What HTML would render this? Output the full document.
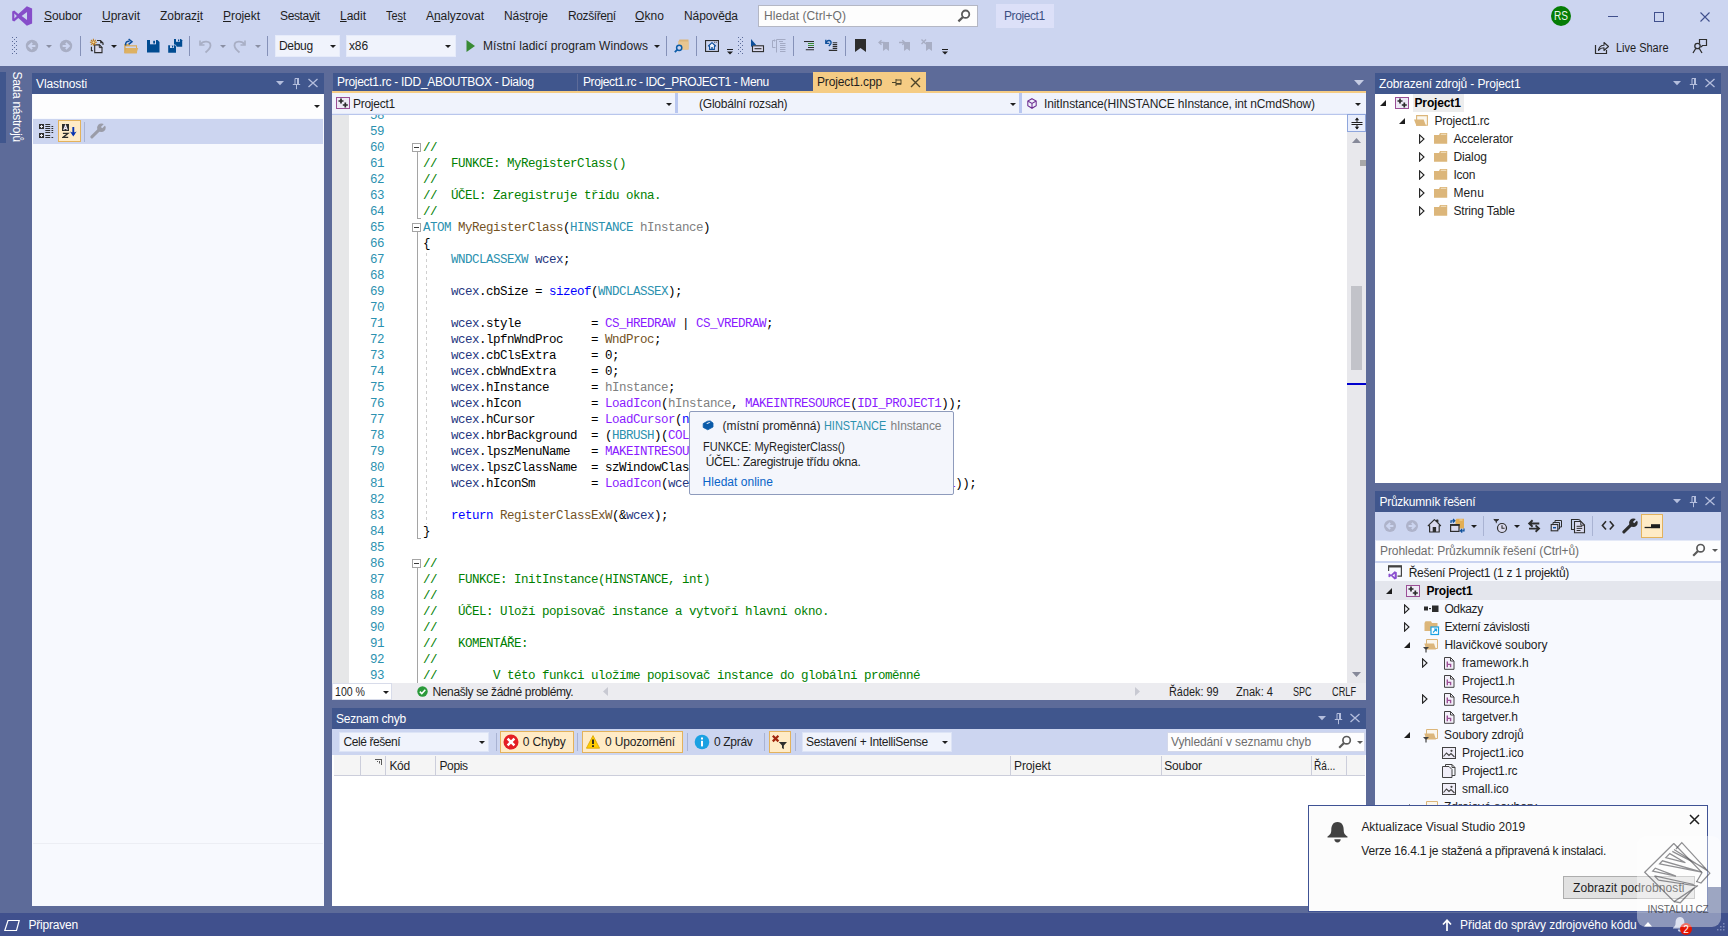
<!DOCTYPE html>
<html><head><meta charset="utf-8"><title>Project1 - Microsoft Visual Studio</title>
<style>
html,body{margin:0;padding:0;overflow:hidden;}
body{width:1728px;height:936px;overflow:hidden;position:relative;background:#5D6B99;font-family:"Liberation Sans",sans-serif;font-size:12px;}
div,svg,.t{position:absolute;}
.t{white-space:pre;}
u{text-decoration:underline;text-underline-offset:1px;}
.ln{left:17px;width:35px;text-align:right;font:12.5px/16px "Liberation Mono",monospace;letter-spacing:-0.501px;color:#2B91AF;height:16px;white-space:pre;}
.cl{left:91px;font:12.5px/16px "Liberation Mono",monospace;letter-spacing:-0.501px;color:#000;height:16px;white-space:pre;}
.cl span{position:static;}
</style></head>
<body>
<div style="left:0px;top:0px;width:1728px;height:66px;background:#CCD5F0;"></div>
<svg style="left:12px;top:6px;" width="20.5" height="20" viewBox="0 0 21 21" preserveAspectRatio="none"><path d="M15.2 0.3 L20.6 2.6 V18.4 L15.2 20.7 L6.5 12.6 L2.3 16.3 L0.2 15.2 V5.8 L2.3 4.7 L6.5 8.4 Z M15.4 6.2 L9.9 10.5 L15.4 14.8 Z M2.4 8 V13 L5 10.5 Z" fill="#864DC9" fill-rule="evenodd"/></svg>
<span id="t1" class="t" style="left:44px;top:8px;font-size:12px;line-height:16px;color:#1E1E1E;letter-spacing:-0.131px;"><u>S</u>oubor</span>
<span id="t2" class="t" style="left:102px;top:8px;font-size:12px;line-height:16px;color:#1E1E1E;letter-spacing:-0.002px;"><u>U</u>pravit</span>
<span id="t3" class="t" style="left:160px;top:8px;font-size:12px;line-height:16px;color:#1E1E1E;letter-spacing:-0.050px;">Zobraz<u>i</u>t</span>
<span id="t4" class="t" style="left:223px;top:8px;font-size:12px;line-height:16px;color:#1E1E1E;letter-spacing:-0.055px;"><u>P</u>rojekt</span>
<span id="t5" class="t" style="left:280px;top:8px;font-size:12px;line-height:16px;color:#1E1E1E;letter-spacing:-0.358px;">Sesta<u>v</u>it</span>
<span id="t6" class="t" style="left:340px;top:8px;font-size:12px;line-height:16px;color:#1E1E1E;letter-spacing:-0.010px;"><u>L</u>adit</span>
<span id="t7" class="t" style="left:386px;top:8px;font-size:12px;line-height:16px;color:#1E1E1E;transform-origin:0 0;transform:scaleX(0.9078);">Te<u>s</u>t</span>
<span id="t8" class="t" style="left:426px;top:8px;font-size:12px;line-height:16px;color:#1E1E1E;letter-spacing:-0.077px;">A<u>n</u>alyzovat</span>
<span id="t9" class="t" style="left:504px;top:8px;font-size:12px;line-height:16px;color:#1E1E1E;letter-spacing:-0.094px;">Nás<u>t</u>roje</span>
<span id="t10" class="t" style="left:568px;top:8px;font-size:12px;line-height:16px;color:#1E1E1E;letter-spacing:-0.397px;">Rozšíře<u>n</u>í</span>
<span id="t11" class="t" style="left:635px;top:8px;font-size:12px;line-height:16px;color:#1E1E1E;letter-spacing:0.085px;"><u>O</u>kno</span>
<span id="t12" class="t" style="left:684px;top:8px;font-size:12px;line-height:16px;color:#1E1E1E;letter-spacing:-0.100px;">Nápově<u>d</u>a</span>
<div style="left:758px;top:5px;width:220px;height:22px;background:#FDFDFD;border:1px solid #B4B7C4;box-sizing:border-box;"></div>
<span id="t13" class="t" style="left:764px;top:8px;font-size:12px;line-height:16px;color:#6E6E6E;letter-spacing:0.067px;">Hledat (Ctrl+Q)</span>
<svg style="left:957px;top:9px;" width="14" height="14" viewBox="0 0 14 14" preserveAspectRatio="none"><circle cx="8.6" cy="5.2" r="3.7" fill="none" stroke="#5A5A5A" stroke-width="1.8"/><path d="M6 8L1.4 12.4" stroke="#5A5A5A" stroke-width="2.3"/></svg>
<div style="left:996px;top:4px;width:58px;height:24px;background:#DCE0F8;"></div>
<span id="t14" class="t" style="left:1004px;top:8px;font-size:12px;line-height:16px;color:#3B4F81;letter-spacing:-0.404px;">Project1</span>
<div style="left:1551px;top:6px;width:20px;height:20px;background:#057D05;border-radius:10px;"></div>
<span id="t15" class="t" style="left:1554px;top:8px;font-size:12px;line-height:16px;color:#EAF5EA;transform-origin:0 0;transform:scaleX(0.8397);">RS</span>
<svg style="left:1600px;top:8px;" width="120" height="18" viewBox="0 0 120 18" preserveAspectRatio="none"><path d="M8 8.5H18" stroke="#40508D" stroke-width="1"/><rect x="54.5" y="4.5" width="9" height="9" fill="none" stroke="#40508D" stroke-width="1"/><path d="M100.5 4.5 L109.5 13.5 M109.5 4.5 L100.5 13.5" stroke="#40508D" stroke-width="1.1"/></svg>
<svg style="left:12px;top:37px;" width="6" height="18" viewBox="0 0 6 18" preserveAspectRatio="none"><rect x="0" y="0" width="1" height="1" fill="#5B6B99"/><rect x="4" y="0" width="1" height="1" fill="#5B6B99"/><rect x="2" y="2" width="1" height="1" fill="#5B6B99"/><rect x="2" y="2" width="1" height="1" fill="#5B6B99"/><rect x="0" y="4" width="1" height="1" fill="#5B6B99"/><rect x="4" y="4" width="1" height="1" fill="#5B6B99"/><rect x="2" y="6" width="1" height="1" fill="#5B6B99"/><rect x="2" y="6" width="1" height="1" fill="#5B6B99"/><rect x="0" y="8" width="1" height="1" fill="#5B6B99"/><rect x="4" y="8" width="1" height="1" fill="#5B6B99"/><rect x="2" y="10" width="1" height="1" fill="#5B6B99"/><rect x="2" y="10" width="1" height="1" fill="#5B6B99"/><rect x="0" y="12" width="1" height="1" fill="#5B6B99"/><rect x="4" y="12" width="1" height="1" fill="#5B6B99"/><rect x="2" y="14" width="1" height="1" fill="#5B6B99"/><rect x="2" y="14" width="1" height="1" fill="#5B6B99"/><rect x="0" y="16" width="1" height="1" fill="#5B6B99"/><rect x="4" y="16" width="1" height="1" fill="#5B6B99"/></svg>
<svg style="left:25px;top:39px;" width="14" height="14" viewBox="0 0 14 14" preserveAspectRatio="none"><g transform="translate(7 7) "><circle r="6.2" fill="#A8AEC4"/><path d="M3.4 0H-2.4M0.2 -3L-2.9 0L0.2 3" fill="none" stroke="#CCD5F0" stroke-width="1.9"/></g></svg>
<svg style="left:46px;top:45px;" width="6" height="3" viewBox="0 0 6 3" preserveAspectRatio="none"><path d="M0 0H6L3.0 3Z" fill="#8A8FA3"/></svg>
<svg style="left:59px;top:39px;" width="14" height="14" viewBox="0 0 14 14" preserveAspectRatio="none"><g transform="translate(7 7) scale(-1 1)"><circle r="6.2" fill="#A8AEC4"/><path d="M3.4 0H-2.4M0.2 -3L-2.9 0L0.2 3" fill="none" stroke="#CCD5F0" stroke-width="1.9"/></g></svg>
<div style="left:80px;top:36px;width:1px;height:20px;background:#8591B8;"></div>
<svg style="left:89px;top:38px;" width="16" height="16" viewBox="0 0 16 16" preserveAspectRatio="none"><path d="M8 2.5H11.5L14 5V7" fill="none" stroke="#2D2D2D" stroke-width="1.1"/><path d="M11.2 2.2L14.3 5.3H11.2Z" fill="#2D2D2D"/><path d="M5.7 6.9H10.5L13 9.4V14.6H5.7Z" fill="#DADAEE" stroke="#2D2D2D" stroke-width="1.1"/><path d="M10.3 6.6V9.6H13.3" fill="none" stroke="#2D2D2D" stroke-width="1"/><path d="M2.4 8.7V12.7H4" fill="none" stroke="#2D2D2D" stroke-width="1.1"/><g stroke="#C27D1A" stroke-width="1.05"><path d="M4.4 0.8V7.8M0.9 4.3H7.9M1.9 1.8L6.9 6.8M6.9 1.8L1.9 6.8"/></g><circle cx="4.4" cy="4.3" r="1.1" fill="#F2D9A8"/></svg>
<svg style="left:111px;top:45px;" width="6" height="3" viewBox="0 0 6 3" preserveAspectRatio="none"><path d="M0 0H6L3.0 3Z" fill="#1E1E1E"/></svg>
<svg style="left:123px;top:38px;" width="16" height="16" viewBox="0 0 16 16" preserveAspectRatio="none"><path d="M1.2 6H5.5L6.8 7.3H14V15.3H1.2Z" fill="#D9A956"/><path d="M2.6 8.4H13V10H2.6Z" fill="#CCD5F0"/><path d="M3.6 10H15.2L13.6 15.3H1.6Z" fill="#DDB163"/><path d="M2.6 7.5C2.2 4.3 4 2.9 6.5 3.2" fill="none" stroke="#0D4F9A" stroke-width="1.5"/><path d="M5.6 1L9 3.7L5.6 6.4" fill="none" stroke="#0D4F9A" stroke-width="1.5"/></svg>
<svg style="left:147px;top:40px;" width="13" height="13" viewBox="0 0 13 13" preserveAspectRatio="none"><path d="M0 0H10.5L12.5 2V12.5H0Z" fill="#004B91"/><rect x="3" y="0" width="6" height="4.3" fill="#CCD5F0"/><rect x="6.2" y="0.8" width="1.8" height="2.7" fill="#004B91"/></svg>
<svg style="left:167px;top:38px;" width="16" height="16" viewBox="0 0 16 16" preserveAspectRatio="none"><path d="M7 1H14L15.2 2.2V8.8H7Z" fill="#004B91"/><rect x="9" y="1" width="4" height="2.8" fill="#CCD5F0"/><rect x="11" y="1.5" width="1.2" height="1.8" fill="#004B91"/><path d="M0.6 6.6H8.2L9.6 8V15.2H0.6Z" fill="#CCD5F0"/><path d="M1.2 7.2H8L9 8.2V14.8H1.2Z" fill="#004B91"/><rect x="3" y="7.2" width="4" height="2.8" fill="#CCD5F0"/><rect x="5" y="7.7" width="1.2" height="1.8" fill="#004B91"/></svg>
<div style="left:189px;top:36px;width:1px;height:20px;background:#8591B8;"></div>
<svg style="left:199px;top:39px;" width="13" height="15" viewBox="0 0 13 15" preserveAspectRatio="none"><g transform=""><path d="M1 1.5V6H5.5" fill="none" stroke="#A8AEC4" stroke-width="1.6"/><path d="M1.5 5.5C4 1.5 11.5 1.5 11.5 6.5C11.5 9.5 9 11.5 6.5 13.5" fill="none" stroke="#A8AEC4" stroke-width="1.8"/></g></svg>
<svg style="left:220px;top:45px;" width="6" height="3" viewBox="0 0 6 3" preserveAspectRatio="none"><path d="M0 0H6L3.0 3Z" fill="#8A8FA3"/></svg>
<svg style="left:233px;top:39px;" width="13" height="15" viewBox="0 0 13 15" preserveAspectRatio="none"><g transform="translate(13 0) scale(-1 1)"><path d="M1 1.5V6H5.5" fill="none" stroke="#A8AEC4" stroke-width="1.6"/><path d="M1.5 5.5C4 1.5 11.5 1.5 11.5 6.5C11.5 9.5 9 11.5 6.5 13.5" fill="none" stroke="#A8AEC4" stroke-width="1.8"/></g></svg>
<svg style="left:255px;top:45px;" width="6" height="3" viewBox="0 0 6 3" preserveAspectRatio="none"><path d="M0 0H6L3.0 3Z" fill="#8A8FA3"/></svg>
<div style="left:267px;top:36px;width:1px;height:20px;background:#8591B8;"></div>
<div style="left:275px;top:35px;width:65px;height:22px;background:#F0F3FC;border:1px solid #E6EBFA;box-sizing:border-box;"></div>
<span id="t16" class="t" style="left:279px;top:38px;font-size:12px;line-height:16px;color:#1E1E1E;letter-spacing:-0.306px;">Debug</span>
<svg style="left:330px;top:45px;" width="6" height="3" viewBox="0 0 6 3" preserveAspectRatio="none"><path d="M0 0H6L3.0 3Z" fill="#1E1E1E"/></svg>
<div style="left:346px;top:35px;width:110px;height:22px;background:#F0F3FC;border:1px solid #E6EBFA;box-sizing:border-box;"></div>
<span id="t17" class="t" style="left:349px;top:38px;font-size:12px;line-height:16px;color:#1E1E1E;letter-spacing:-0.144px;">x86</span>
<svg style="left:445px;top:45px;" width="6" height="3" viewBox="0 0 6 3" preserveAspectRatio="none"><path d="M0 0H6L3.0 3Z" fill="#1E1E1E"/></svg>
<svg style="left:466px;top:40px;" width="10" height="12" viewBox="0 0 10 12" preserveAspectRatio="none"><path d="M0.5 0L9 6L0.5 12Z" fill="#388A34"/></svg>
<span id="t18" class="t" style="left:483px;top:38px;font-size:12px;line-height:16px;color:#1E1E1E;letter-spacing:0.033px;">Místní ladicí program Windows</span>
<svg style="left:654px;top:45px;" width="6" height="3" viewBox="0 0 6 3" preserveAspectRatio="none"><path d="M0 0H6L3.0 3Z" fill="#1E1E1E"/></svg>
<div style="left:666px;top:36px;width:1px;height:20px;background:#8591B8;"></div>
<svg style="left:674px;top:38px;" width="16" height="16" viewBox="0 0 16 16" preserveAspectRatio="none"><path d="M4.5 3.5L5.5 1.5H14.5V11.5H4.5Z" fill="#DCB67A"/><path d="M4.5 3.5H14.5V11.5H4.5Z" fill="#E8C691"/><circle cx="5.2" cy="9.8" r="2.6" fill="#CCD5F0" stroke="#0D5DA8" stroke-width="1.5"/><path d="M3.4 11.6L0.8 14.2" stroke="#0D5DA8" stroke-width="1.8"/></svg>
<div style="left:696px;top:36px;width:1px;height:20px;background:#8591B8;"></div>
<svg style="left:705px;top:40px;" width="14" height="12" viewBox="0 0 14 12" preserveAspectRatio="none"><rect x="0.55" y="0.55" width="12.9" height="10.9" fill="none" stroke="#2D2D2D" stroke-width="1.1"/><path d="M7 2.6L3.4 6H4.6V9.4H9.4V6H10.6Z" fill="#F2F5FC" stroke="#0D4F9A" stroke-width="1.1" stroke-linejoin="round"/><rect x="6.3" y="7" width="1.4" height="2.4" fill="#0D4F9A"/><rect x="9.2" y="1.8" width="0.9" height="0.9" fill="#2D2D2D"/><rect x="10.8" y="1.8" width="0.9" height="0.9" fill="#2D2D2D"/></svg>
<svg style="left:727px;top:49px;" width="6" height="6" viewBox="0 0 6 6" preserveAspectRatio="none"><path d="M0 0.5H6" stroke="#1E1E1E"/><path d="M0 2.5H6L3 5.5Z" fill="#1E1E1E"/></svg>
<svg style="left:738px;top:37px;" width="6" height="18" viewBox="0 0 6 18" preserveAspectRatio="none"><rect x="0" y="0" width="1" height="1" fill="#5B6B99"/><rect x="4" y="0" width="1" height="1" fill="#5B6B99"/><rect x="2" y="2" width="1" height="1" fill="#5B6B99"/><rect x="2" y="2" width="1" height="1" fill="#5B6B99"/><rect x="0" y="4" width="1" height="1" fill="#5B6B99"/><rect x="4" y="4" width="1" height="1" fill="#5B6B99"/><rect x="2" y="6" width="1" height="1" fill="#5B6B99"/><rect x="2" y="6" width="1" height="1" fill="#5B6B99"/><rect x="0" y="8" width="1" height="1" fill="#5B6B99"/><rect x="4" y="8" width="1" height="1" fill="#5B6B99"/><rect x="2" y="10" width="1" height="1" fill="#5B6B99"/><rect x="2" y="10" width="1" height="1" fill="#5B6B99"/><rect x="0" y="12" width="1" height="1" fill="#5B6B99"/><rect x="4" y="12" width="1" height="1" fill="#5B6B99"/><rect x="2" y="14" width="1" height="1" fill="#5B6B99"/><rect x="2" y="14" width="1" height="1" fill="#5B6B99"/><rect x="0" y="16" width="1" height="1" fill="#5B6B99"/><rect x="4" y="16" width="1" height="1" fill="#5B6B99"/></svg>
<svg style="left:750px;top:38px;" width="15" height="15" viewBox="0 0 15 15" preserveAspectRatio="none"><rect x="2.5" y="7.8" width="11" height="5.8" fill="#DADAEE" stroke="#2D2D2D" stroke-width="1.1"/><path d="M4.5 10.7H11.5" stroke="#2D2D2D" stroke-width="1.1"/><path d="M1 1V9L3.2 7.2L6.2 7Z" fill="#0D4F9A"/></svg>
<svg style="left:771px;top:38px;" width="16" height="16" viewBox="0 0 16 16" preserveAspectRatio="none"><path d="M4.5 2.5H1.5V9.5H4.5" fill="none" stroke="#A3AAC4" stroke-width="1"/><path d="M3.5 1.5V3.5" stroke="#A3AAC4" stroke-width="1"/><g stroke="#A3AAC4" stroke-width="1"><path d="M5.5 1.5H14.5M5.5 1.5V14.5M8 3.5H12M9 5.5H14.5M9 7.5H14.5M9 9.5H14.5M9 11.5H14.5M9 13.5H14.5"/></g></svg>
<div style="left:793px;top:36px;width:1px;height:20px;background:#8591B8;"></div>
<svg style="left:804px;top:41px;" width="10" height="10" viewBox="0 0 10 10" preserveAspectRatio="none"><path d="M0 0.5H10" stroke="#2D2D2D" stroke-width="1.1"/><path d="M4 2.5H10M4 4.5H10" stroke="#388A34" stroke-width="1.1"/><path d="M4 6.5H10M1.8 8.7H10" stroke="#2D2D2D" stroke-width="1.1"/></svg>
<svg style="left:825px;top:39px;" width="13" height="13" viewBox="0 0 13 13" preserveAspectRatio="none"><g stroke="#2D2D2D" stroke-width="1.1"><path d="M7.7 3.7H12.2M7.7 5.6H12.2M7.7 7.5H12.2M7.7 9.4H12.2M3.8 11.4H12.2"/></g><path d="M0.8 0.8V4.3H4.3" fill="none" stroke="#0D4F9A" stroke-width="1.3"/><path d="M1.2 3.8C2 0.6 6.6 0.8 6 4.2C5.7 5.6 4.8 6.2 3.8 7" fill="none" stroke="#0D4F9A" stroke-width="1.4"/></svg>
<div style="left:845px;top:36px;width:1px;height:20px;background:#8591B8;"></div>
<svg style="left:855px;top:39px;" width="11" height="13" viewBox="0 0 11 13" preserveAspectRatio="none"><path d="M0 0H11V13L5.5 9L0 13Z" fill="#2D2D2D"/></svg>
<svg style="left:878px;top:39px;" width="12" height="13" viewBox="0 0 12 13" preserveAspectRatio="none"><path d="M5 3H11V12L8 9.7L5 12Z" fill="#A8AEC4"/><path d="M6.5 3.5H1.5M3.5 1.2L1 3.5L3.5 5.8" fill="none" stroke="#A8AEC4" stroke-width="1.3"/></svg>
<svg style="left:899px;top:39px;" width="12" height="13" viewBox="0 0 12 13" preserveAspectRatio="none"><path d="M5 3H11V12L8 9.7L5 12Z" fill="#A8AEC4"/><path d="M0 3.5H5.5M3.3 1.2L5.8 3.5L3.3 5.8" fill="none" stroke="#A8AEC4" stroke-width="1.3"/></svg>
<svg style="left:921px;top:39px;" width="12" height="13" viewBox="0 0 12 13" preserveAspectRatio="none"><path d="M5 3H11V12L8 9.7L5 12Z" fill="#A8AEC4"/><path d="M0.5 0.5L5 5M5 0.5L0.5 5" fill="none" stroke="#A8AEC4" stroke-width="1.4"/></svg>
<svg style="left:942px;top:49px;" width="6" height="6" viewBox="0 0 6 6" preserveAspectRatio="none"><path d="M0 0.5H6" stroke="#1E1E1E"/><path d="M0 2.5H6L3 5.5Z" fill="#1E1E1E"/></svg>
<svg style="left:1594px;top:40px;" width="16" height="15" viewBox="0 0 16 15" preserveAspectRatio="none"><path d="M1.5 5V13.5H12.5V10" fill="none" stroke="#2D2D2D" stroke-width="1.2"/><path d="M4.5 10.5C5 7 7.5 5.3 10 5.3V2.5L14.5 6.5L10 10.5V7.8C8 7.8 6 8.5 4.5 10.5Z" fill="none" stroke="#2D2D2D" stroke-width="1.1" stroke-linejoin="round"/></svg>
<span id="t19" class="t" style="left:1615.5px;top:40px;font-size:12px;line-height:16px;color:#1E1E1E;transform-origin:0 0;transform:scaleX(0.9150);">Live Share</span>
<svg style="left:1692px;top:38px;" width="16" height="16" viewBox="0 0 16 16" preserveAspectRatio="none"><circle cx="5.5" cy="8" r="2.7" fill="none" stroke="#2D2D2D" stroke-width="1.3"/><path d="M1 15L3.7 10.5M10 15L7.3 10.5" stroke="#2D2D2D" stroke-width="1.3"/><path d="M7.5 5.5V1.5H14.5V7.5H10.5L9 9" fill="none" stroke="#2D2D2D" stroke-width="1.2"/></svg>
<div style="left:0px;top:66px;width:1728px;height:847px;background:#5D6B99;"></div>
<div style="left:0px;top:72px;width:6px;height:71px;background:#40568D;"></div>
<span id="t20" class="t" style="left:0px;top:-12px;font-size:12px;line-height:16px;color:#fff;transform-origin:0 0;transform:translate(25px,71.5px) rotate(90deg);top:0;left:0;letter-spacing:-0.28px;">Sada nástrojů</span>
<div style="left:32px;top:73px;width:292px;height:833px;background:#F7F9FE;"></div>
<div style="left:32px;top:73px;width:292px;height:21px;background:#40568D;"></div>
<span id="t21" class="t" style="left:36px;top:76px;font-size:12px;line-height:16px;color:#fff;letter-spacing:-0.109px;">Vlastnosti</span>
<svg style="left:276px;top:81px;" width="8" height="5" viewBox="0 0 8 5" preserveAspectRatio="none"><path d="M0 0H8L4 4.3Z" fill="#B4BEDD"/></svg>
<svg style="left:292px;top:78px;" width="9" height="12" viewBox="0 0 9 12" preserveAspectRatio="none"><path d="M3 0.5H7M3 0.5V6.5M0.8 6.5H8.2M4.5 6.5V11.2" fill="none" stroke="#B4BEDD" stroke-width="1"/><rect x="5" y="0" width="2" height="6.5" fill="#B4BEDD"/></svg>
<svg style="left:307px;top:78px;" width="12" height="10" viewBox="0 0 12 10" preserveAspectRatio="none"><path d="M1.5 1L10.5 9M10.5 1L1.5 9" stroke="#B4BEDD" stroke-width="1.3"/></svg>
<div style="left:33px;top:94px;width:290px;height:24px;background:#FDFDFE;"></div>
<svg style="left:314px;top:105px;" width="6" height="3" viewBox="0 0 6 3" preserveAspectRatio="none"><path d="M0 0H6L3.0 3Z" fill="#1E1E1E"/></svg>
<div style="left:33px;top:119px;width:290px;height:25px;background:#CCD5F0;"></div>
<svg style="left:39px;top:124px;" width="15" height="14" viewBox="0 0 15 14" preserveAspectRatio="none"><g fill="#2D2D2D"><rect x="0" y="0" width="5" height="5"/><rect x="0" y="9" width="5" height="5"/></g><g stroke="#E8E8F0" stroke-width="1.1"><path d="M1 2.5H4M2.5 1V4M1 11.5H4M2.5 10V13"/></g><g stroke="#2D2D2D" stroke-width="1"><path d="M6.3 0.5H11.2M6.3 2.5H11.2M12.5 2.5H14.2M6.3 4.5H11.2M12.5 4.5H14.2M6.3 6.5H11.2M12.5 6.5H14.2M6.3 8.5H11.2M12.5 8.5H14.2M6.3 11.5H11.2M6.3 13.5H11.2M12.5 13.5H14.2"/></g></svg>
<div style="left:58px;top:120px;width:23px;height:22px;background:#FFEBC6;border:1px solid #E3B25C;box-sizing:border-box;"></div>
<svg style="left:62px;top:124px;" width="15" height="14" viewBox="0 0 15 14" preserveAspectRatio="none"><rect x="0" y="0" width="7" height="7" fill="#2D2D2D"/><path d="M1.7 6L3.5 1.2L5.3 6M2.4 4.4H4.6" fill="none" stroke="#F0EAF8" stroke-width="1.1"/><path d="M0.9 9.4H5.9L1 13.4H6.2" fill="none" stroke="#2D2D2D" stroke-width="1.35" stroke-linejoin="miter"/><path d="M11.3 3V11" stroke="#0A35B0" stroke-width="1.9"/><path d="M8 7.6L11.3 12.6L14.6 7.6Q11.3 9.6 8 7.6Z" fill="#0A35B0"/></svg>
<div style="left:84px;top:122px;width:1px;height:20px;background:#A9B3D3;"></div>
<svg style="left:90px;top:123px;" width="16" height="16" viewBox="0 0 16 16" preserveAspectRatio="none"><path d="M9.3 6.7L1.9 13.9" stroke="#9A9CA8" stroke-width="3" stroke-linecap="round"/><circle cx="11.4" cy="4.7" r="4.3" fill="#9A9CA8"/><path d="M11.6 4.6L15.5 0.7" stroke="#CCD5F0" stroke-width="1.9"/></svg>
<div style="left:33px;top:843px;width:290px;height:1px;background:#ECEEF4;"></div>
<div style="left:333px;top:73px;width:480px;height:18px;background:#40568D;"></div>
<span id="t22" class="t" style="left:337px;top:74px;font-size:12px;line-height:16px;color:#fff;letter-spacing:-0.282px;">Project1.rc - IDD_ABOUTBOX - Dialog</span>
<div style="left:577px;top:74px;width:1px;height:17px;background:#5D6B99;"></div>
<span id="t23" class="t" style="left:583px;top:74px;font-size:12px;line-height:16px;color:#fff;letter-spacing:-0.391px;">Project1.rc - IDC_PROJECT1 - Menu</span>
<div style="left:813px;top:72px;width:113px;height:21px;background:#F5CC84;"></div>
<span id="t24" class="t" style="left:817px;top:74px;font-size:12px;line-height:16px;color:#1E1E1E;letter-spacing:-0.148px;">Project1.cpp</span>
<svg style="left:892px;top:78px;" width="10" height="9" viewBox="0 0 10 9" preserveAspectRatio="none"><path d="M0 4.5H4M4 1V8M4 2H9M4 6H9M9 1.5V6.5" fill="none" stroke="#4D4429" stroke-width="1"/><path d="M4 5H9V6.5H4Z" fill="#4D4429"/></svg>
<svg style="left:910px;top:77px;" width="11" height="11" viewBox="0 0 11 11" preserveAspectRatio="none"><path d="M1 1L10 10M10 1L1 10" stroke="#4D4429" stroke-width="1.4"/></svg>
<svg style="left:1354px;top:80px;" width="10" height="6" viewBox="0 0 10 6" preserveAspectRatio="none"><path d="M0 0H10L5 5.5Z" fill="#C5CCE3"/></svg>
<div style="left:332px;top:91px;width:1034px;height:2px;background:#F5CC84;"></div>
<div style="left:332px;top:93px;width:1034px;height:22px;background:#B9C7F0;"></div>
<div style="left:332px;top:93px;width:343px;height:20px;background:#F0F3FC;"></div>
<div style="left:678px;top:93px;width:341px;height:20px;background:#F0F3FC;"></div>
<div style="left:1022px;top:93px;width:344px;height:20px;background:#F0F3FC;"></div>
<div style="left:332px;top:113px;width:1034px;height:1px;background:#E4EAFA;"></div>
<svg style="left:336px;top:97px;" width="14" height="12" viewBox="0 0 14 12" preserveAspectRatio="none"><rect x="0.5" y="0.5" width="13" height="11" fill="#EEE9F5" stroke="#9B4F96" stroke-width="1"/><path d="M5 1.5V6.5M2.5 4H7.5M9.3 5.5V10.5M6.8 8H11.8" stroke="#2B2B2B" stroke-width="1.7"/></svg>
<span id="t25" class="t" style="left:353px;top:96px;font-size:12px;line-height:16px;color:#1E1E1E;letter-spacing:-0.271px;">Project1</span>
<svg style="left:666px;top:103px;" width="6" height="3" viewBox="0 0 6 3" preserveAspectRatio="none"><path d="M0 0H6L3.0 3Z" fill="#1E1E1E"/></svg>
<span id="t26" class="t" style="left:699px;top:96px;font-size:12px;line-height:16px;color:#1E1E1E;letter-spacing:-0.215px;">(Globální rozsah)</span>
<svg style="left:1010px;top:103px;" width="6" height="3" viewBox="0 0 6 3" preserveAspectRatio="none"><path d="M0 0H6L3.0 3Z" fill="#1E1E1E"/></svg>
<svg style="left:1027px;top:98px;" width="10" height="11" viewBox="0 0 10 11" preserveAspectRatio="none"><path d="M5 0.7L9.2 3V7.8L5 10.3L0.8 7.8V3Z M0.8 3L5 5.4L9.2 3M5 5.4V10.3" fill="none" stroke="#6C2D91" stroke-width="1.05"/></svg>
<span id="t27" class="t" style="left:1044px;top:96px;font-size:12px;line-height:16px;color:#1E1E1E;letter-spacing:-0.148px;">InitInstance(HINSTANCE hInstance, int nCmdShow)</span>
<svg style="left:1355px;top:103px;" width="6" height="3" viewBox="0 0 6 3" preserveAspectRatio="none"><path d="M0 0H6L3.0 3Z" fill="#1E1E1E"/></svg>
<div style="left:332px;top:114px;width:1015px;height:569px;background:#fff;"></div>
<div style="left:332px;top:114px;width:17px;height:569px;background:#E6E7E8;"></div>
<div style="left:1347px;top:114px;width:19px;height:569px;background:#E8E8EC;"></div>
<div style="left:1347px;top:114px;width:19px;height:18px;background:#E9EEFC;border:1px solid #8FA6DC;box-sizing:border-box;"></div>
<svg style="left:1351px;top:117px;" width="12" height="13" viewBox="0 0 12 13" preserveAspectRatio="none"><path d="M0.5 5.5H11.5M0.5 7.5H11.5M6 1V5M6 8V12" stroke="#1E1E1E" stroke-width="1"/><path d="M3.8 3.2L6 0.5L8.2 3.2ZM3.8 9.8L6 12.5L8.2 9.8Z" fill="#1E1E1E"/></svg>
<svg style="left:1352px;top:138px;" width="9" height="5" viewBox="0 0 9 5" preserveAspectRatio="none"><path d="M0 5H9L4.5 0Z" fill="#868999"/></svg>
<svg style="left:1352px;top:672px;" width="9" height="5" viewBox="0 0 9 5" preserveAspectRatio="none"><path d="M0 0H9L4.5 5Z" fill="#868999"/></svg>
<div style="left:1360px;top:160px;width:6px;height:6px;background:#A8A8A8;"></div>
<div style="left:1351px;top:286px;width:11px;height:84px;background:#C2C3C9;"></div>
<div style="left:1347px;top:383px;width:19px;height:2px;background:#0000CD;"></div>
<div style="left:332px;top:114px;width:1015px;height:569px;overflow:hidden;"><div class="ln" style="top:-6px">58</div><div class="ln" style="top:10px">59</div><div class="ln" style="top:26px">60</div><div class="cl" style="top:26px"><span style="color:#008000">//</span></div><div class="ln" style="top:42px">61</div><div class="cl" style="top:42px"><span style="color:#008000">//  FUNKCE: MyRegisterClass()</span></div><div class="ln" style="top:58px">62</div><div class="cl" style="top:58px"><span style="color:#008000">//</span></div><div class="ln" style="top:74px">63</div><div class="cl" style="top:74px"><span style="color:#008000">//  ÚČEL: Zaregistruje třídu okna.</span></div><div class="ln" style="top:90px">64</div><div class="cl" style="top:90px"><span style="color:#008000">//</span></div><div class="ln" style="top:106px">65</div><div class="cl" style="top:106px"><span style="color:#2B91AF">ATOM</span> <span style="color:#74531F">MyRegisterClass</span>(<span style="color:#2B91AF">HINSTANCE</span> <span style="color:#808080">hInstance</span>)</div><div class="ln" style="top:122px">66</div><div class="cl" style="top:122px">{</div><div class="ln" style="top:138px">67</div><div class="cl" style="top:138px">    <span style="color:#2B91AF">WNDCLASSEXW</span> <span style="color:#1F377F">wcex</span>;</div><div class="ln" style="top:154px">68</div><div class="ln" style="top:170px">69</div><div class="cl" style="top:170px">    <span style="color:#1F377F">wcex</span>.cbSize = <span style="color:#0000FF">sizeof</span>(<span style="color:#2B91AF">WNDCLASSEX</span>);</div><div class="ln" style="top:186px">70</div><div class="ln" style="top:202px">71</div><div class="cl" style="top:202px">    <span style="color:#1F377F">wcex</span>.style          = <span style="color:#8A1BFF">CS_HREDRAW</span> | <span style="color:#8A1BFF">CS_VREDRAW</span>;</div><div class="ln" style="top:218px">72</div><div class="cl" style="top:218px">    <span style="color:#1F377F">wcex</span>.lpfnWndProc    = <span style="color:#74531F">WndProc</span>;</div><div class="ln" style="top:234px">73</div><div class="cl" style="top:234px">    <span style="color:#1F377F">wcex</span>.cbClsExtra     = 0;</div><div class="ln" style="top:250px">74</div><div class="cl" style="top:250px">    <span style="color:#1F377F">wcex</span>.cbWndExtra     = 0;</div><div class="ln" style="top:266px">75</div><div class="cl" style="top:266px">    <span style="color:#1F377F">wcex</span>.hInstance      = <span style="color:#808080">hInstance</span>;</div><div class="ln" style="top:282px">76</div><div class="cl" style="top:282px">    <span style="color:#1F377F">wcex</span>.hIcon          = <span style="color:#8A1BFF">LoadIcon</span>(<span style="color:#808080">hInstance</span>, <span style="color:#8A1BFF">MAKEINTRESOURCE</span>(<span style="color:#8A1BFF">IDI_PROJECT1</span>));</div><div class="ln" style="top:298px">77</div><div class="cl" style="top:298px">    <span style="color:#1F377F">wcex</span>.hCursor        = <span style="color:#8A1BFF">LoadCursor</span>(<span style="color:#0000FF">nullptr</span>, <span style="color:#8A1BFF">IDC_ARROW</span>);</div><div class="ln" style="top:314px">78</div><div class="cl" style="top:314px">    <span style="color:#1F377F">wcex</span>.hbrBackground  = (<span style="color:#2B91AF">HBRUSH</span>)(<span style="color:#8A1BFF">COLOR_WINDOW</span>+1);</div><div class="ln" style="top:330px">79</div><div class="cl" style="top:330px">    <span style="color:#1F377F">wcex</span>.lpszMenuName   = <span style="color:#8A1BFF">MAKEINTRESOURCEW</span>(<span style="color:#8A1BFF">IDC_PROJECT1</span>);</div><div class="ln" style="top:346px">80</div><div class="cl" style="top:346px">    <span style="color:#1F377F">wcex</span>.lpszClassName  = szWindowClass;</div><div class="ln" style="top:362px">81</div><div class="cl" style="top:362px">    <span style="color:#1F377F">wcex</span>.hIconSm        = <span style="color:#8A1BFF">LoadIcon</span>(<span style="color:#1F377F">wcex</span>.hInstance, <span style="color:#8A1BFF">MAKEINTRESOURCE</span>(<span style="color:#8A1BFF">IDI_SMALL</span>));</div><div class="ln" style="top:378px">82</div><div class="ln" style="top:394px">83</div><div class="cl" style="top:394px">    <span style="color:#0000FF">return</span> <span style="color:#74531F">RegisterClassExW</span>(&amp;<span style="color:#1F377F">wcex</span>);</div><div class="ln" style="top:410px">84</div><div class="cl" style="top:410px">}</div><div class="ln" style="top:426px">85</div><div class="ln" style="top:442px">86</div><div class="cl" style="top:442px"><span style="color:#008000">//</span></div><div class="ln" style="top:458px">87</div><div class="cl" style="top:458px"><span style="color:#008000">//   FUNKCE: InitInstance(HINSTANCE, int)</span></div><div class="ln" style="top:474px">88</div><div class="cl" style="top:474px"><span style="color:#008000">//</span></div><div class="ln" style="top:490px">89</div><div class="cl" style="top:490px"><span style="color:#008000">//   ÚČEL: Uloží popisovač instance a vytvoří hlavní okno.</span></div><div class="ln" style="top:506px">90</div><div class="cl" style="top:506px"><span style="color:#008000">//</span></div><div class="ln" style="top:522px">91</div><div class="cl" style="top:522px"><span style="color:#008000">//   KOMENTÁŘE:</span></div><div class="ln" style="top:538px">92</div><div class="cl" style="top:538px"><span style="color:#008000">//</span></div><div class="ln" style="top:554px">93</div><div class="cl" style="top:554px"><span style="color:#008000">//        V této funkci uložíme popisovač instance do globální proměnné</span></div><div style="left:80px;top:29px;width:9px;height:9px;border:1px solid #A5A5A5;box-sizing:border-box;background:#fff"></div><div style="left:82px;top:33px;width:5px;height:1px;background:#3B3B3B"></div><div style="left:80px;top:109px;width:9px;height:9px;border:1px solid #A5A5A5;box-sizing:border-box;background:#fff"></div><div style="left:82px;top:113px;width:5px;height:1px;background:#3B3B3B"></div><div style="left:80px;top:445px;width:9px;height:9px;border:1px solid #A5A5A5;box-sizing:border-box;background:#fff"></div><div style="left:82px;top:449px;width:5px;height:1px;background:#3B3B3B"></div><div style="left:85px;top:38px;width:1px;height:67px;background:#A5A5A5"></div><div style="left:85px;top:104px;width:4px;height:1px;background:#A5A5A5"></div><div style="left:85px;top:118px;width:1px;height:307px;background:#A5A5A5"></div><div style="left:85px;top:424px;width:4px;height:1px;background:#A5A5A5"></div><div style="left:85px;top:454px;width:1px;height:115px;background:#A5A5A5"></div><div style="left:94px;top:139px;width:1px;height:271px;background:repeating-linear-gradient(to bottom,#CFCFCF 0,#CFCFCF 3px,transparent 3px,transparent 6px)"></div></div>
<div style="left:332px;top:114px;width:1015px;height:1px;background:#B9C6EC;"></div>
<div style="left:689px;top:411px;width:265px;height:84px;background:#F4F6FC;border:1px solid #8E9BBC;box-sizing:border-box;border-radius:2px;"></div>
<svg style="left:702px;top:420px;" width="12" height="11" viewBox="0 0 12 11" preserveAspectRatio="none"><path d="M5.5 1.2L8.2 0.9L11 3V7L5.8 9.8L1.2 7.4V3.6Z" fill="#0A5AA8" stroke="#0A5AA8" stroke-width="0.8" stroke-linejoin="round"/><path d="M4.2 3.4L7.2 1.9L8.4 2.5L5.4 4.1Z" fill="#E8EEF8"/></svg>
<span id="t28" class="t" style="left:722.5px;top:418px;font-size:12px;line-height:16px;color:#1E1E1E;letter-spacing:-0.003px;">(místní proměnná)</span>
<span id="t29" class="t" style="left:824.4px;top:418px;font-size:12px;line-height:16px;color:#2B91AF;transform-origin:0 0;transform:scaleX(0.9087);">HINSTANCE</span>
<span id="t30" class="t" style="left:890.4px;top:418px;font-size:12px;line-height:16px;color:#808080;letter-spacing:-0.123px;">hInstance</span>
<span id="t31" class="t" style="left:702.6px;top:439px;font-size:12px;line-height:16px;color:#1E1E1E;transform-origin:0 0;transform:scaleX(0.9180);">FUNKCE: MyRegisterClass()</span>
<span id="t32" class="t" style="left:705.7px;top:454px;font-size:12px;line-height:16px;color:#1E1E1E;letter-spacing:-0.240px;">ÚČEL: Zaregistruje třídu okna.</span>
<span id="t33" class="t" style="left:702.6px;top:474px;font-size:12px;line-height:16px;color:#0A64C8;letter-spacing:0.019px;">Hledat online</span>
<div style="left:332px;top:683px;width:1034px;height:17px;background:#ECECF0;"></div>
<div style="left:332px;top:683px;width:60px;height:17px;background:#fff;border:1px solid #D8DCEA;box-sizing:border-box;"></div>
<span id="t34" class="t" style="left:335px;top:684px;font-size:12px;line-height:16px;color:#1E1E1E;transform-origin:0 0;transform:scaleX(0.8815);">100 %</span>
<svg style="left:383px;top:691px;" width="6" height="3" viewBox="0 0 6 3" preserveAspectRatio="none"><path d="M0 0H6L3.0 3Z" fill="#1E1E1E"/></svg>
<svg style="left:417px;top:686px;" width="11" height="11" viewBox="0 0 11 11" preserveAspectRatio="none"><circle cx="5.5" cy="5.5" r="5.2" fill="#2A9A3A"/><path d="M2.8 5.6L4.8 7.6L8.3 3.8" fill="none" stroke="#fff" stroke-width="1.5"/></svg>
<span id="t35" class="t" style="left:432.5px;top:684px;font-size:12px;line-height:16px;color:#1E1E1E;letter-spacing:-0.374px;">Nenašly se žádné problémy.</span>
<svg style="left:603px;top:687px;" width="5" height="9" viewBox="0 0 5 9" preserveAspectRatio="none"><path d="M5 0V9L0 4.5Z" fill="#C8C9D2"/></svg>
<svg style="left:1135px;top:687px;" width="5" height="9" viewBox="0 0 5 9" preserveAspectRatio="none"><path d="M0 0V9L5 4.5Z" fill="#C8C9D2"/></svg>
<span id="t36" class="t" style="left:1168.7px;top:684px;font-size:12px;line-height:16px;color:#1E1E1E;transform-origin:0 0;transform:scaleX(0.9067);">Řádek: 99</span>
<span id="t37" class="t" style="left:1236px;top:684px;font-size:12px;line-height:16px;color:#1E1E1E;transform-origin:0 0;transform:scaleX(0.9243);">Znak: 4</span>
<span id="t38" class="t" style="left:1292.6px;top:684px;font-size:12px;line-height:16px;color:#1E1E1E;transform-origin:0 0;transform:scaleX(0.7534);">SPC</span>
<span id="t39" class="t" style="left:1332px;top:684px;font-size:12px;line-height:16px;color:#1E1E1E;transform-origin:0 0;transform:scaleX(0.7657);">CRLF</span>
<div style="left:332px;top:708px;width:1034px;height:198px;background:#fff;"></div>
<div style="left:332px;top:708px;width:1034px;height:21px;background:#40568D;"></div>
<span id="t40" class="t" style="left:336px;top:711px;font-size:12px;line-height:16px;color:#fff;letter-spacing:-0.257px;">Seznam chyb</span>
<svg style="left:1318px;top:716px;" width="8" height="5" viewBox="0 0 8 5" preserveAspectRatio="none"><path d="M0 0H8L4 4.3Z" fill="#B4BEDD"/></svg>
<svg style="left:1334px;top:713px;" width="9" height="12" viewBox="0 0 9 12" preserveAspectRatio="none"><path d="M3 0.5H7M3 0.5V6.5M0.8 6.5H8.2M4.5 6.5V11.2" fill="none" stroke="#B4BEDD" stroke-width="1"/><rect x="5" y="0" width="2" height="6.5" fill="#B4BEDD"/></svg>
<svg style="left:1349px;top:713px;" width="12" height="10" viewBox="0 0 12 10" preserveAspectRatio="none"><path d="M1.5 1L10.5 9M10.5 1L1.5 9" stroke="#B4BEDD" stroke-width="1.3"/></svg>
<div style="left:332px;top:729px;width:1034px;height:26px;background:#CCD5F0;"></div>
<div style="left:339px;top:732px;width:150px;height:20px;background:#F0F3FC;border:1px solid #DDE4F6;box-sizing:border-box;"></div>
<span id="t41" class="t" style="left:343.5px;top:734px;font-size:12px;line-height:16px;color:#1E1E1E;letter-spacing:-0.417px;">Celé řešení</span>
<svg style="left:479px;top:741px;" width="6" height="3" viewBox="0 0 6 3" preserveAspectRatio="none"><path d="M0 0H6L3.0 3Z" fill="#1E1E1E"/></svg>
<div style="left:496px;top:733px;width:1px;height:18px;background:#A9B3D3;"></div>
<div style="left:500px;top:731px;width:74px;height:22px;background:#FFEBC6;border:1px solid #E3B25C;box-sizing:border-box;"></div>
<svg style="left:503px;top:734px;" width="16" height="16" viewBox="0 0 16 16" preserveAspectRatio="none"><circle cx="8" cy="8" r="7.5" fill="#E41E24"/><circle cx="8" cy="8" r="6" fill="none" stroke="#fff" stroke-width="0"/><path d="M4.6 4.6L11.4 11.4M11.4 4.6L4.6 11.4" stroke="#fff" stroke-width="2.4"/></svg>
<span id="t42" class="t" style="left:522.7px;top:734px;font-size:12px;line-height:16px;color:#1E1E1E;letter-spacing:-0.159px;">0 Chyby</span>
<div style="left:577px;top:733px;width:1px;height:18px;background:#A9B3D3;"></div>
<div style="left:582px;top:731px;width:101px;height:22px;background:#FFEBC6;border:1px solid #E3B25C;box-sizing:border-box;"></div>
<svg style="left:586px;top:735px;" width="14" height="14" viewBox="0 0 14 14" preserveAspectRatio="none"><path d="M7 0.6L13.6 13.2H0.4Z" fill="#FFCC00" stroke="#D9A400" stroke-width="0.8"/><path d="M7 4.5V9" stroke="#1E1E1E" stroke-width="1.8"/><rect x="6.1" y="10.2" width="1.8" height="1.8" fill="#1E1E1E"/></svg>
<span id="t43" class="t" style="left:605px;top:734px;font-size:12px;line-height:16px;color:#1E1E1E;letter-spacing:-0.178px;">0 Upozornění</span>
<div style="left:687px;top:733px;width:1px;height:18px;background:#A9B3D3;"></div>
<svg style="left:694px;top:734px;" width="16" height="16" viewBox="0 0 16 16" preserveAspectRatio="none"><circle cx="8" cy="8" r="7.3" fill="#1BA1E2"/><rect x="7" y="6.8" width="2" height="5.6" fill="#fff"/><rect x="7" y="3.5" width="2" height="2" fill="#fff"/></svg>
<span id="t44" class="t" style="left:714px;top:734px;font-size:12px;line-height:16px;color:#1E1E1E;letter-spacing:-0.321px;">0 Zpráv</span>
<div style="left:764px;top:733px;width:1px;height:18px;background:#A9B3D3;"></div>
<div style="left:769px;top:731px;width:22px;height:22px;background:#FFEBC6;border:1px solid #E3B25C;box-sizing:border-box;"></div>
<svg style="left:772px;top:735px;" width="16" height="15" viewBox="0 0 16 15" preserveAspectRatio="none"><path d="M0.8 0.8L6.4 6.4M6.4 0.8L0.8 6.4" stroke="#A1260D" stroke-width="2.2"/><path d="M6.8 7H15L11.8 10.6V14.2L10 13V10.6Z" fill="#2D2D2D"/></svg>
<div style="left:795px;top:733px;width:1px;height:18px;background:#A9B3D3;"></div>
<div style="left:802px;top:732px;width:150px;height:20px;background:#F0F3FC;border:1px solid #DDE4F6;box-sizing:border-box;"></div>
<span id="t45" class="t" style="left:806px;top:734px;font-size:12px;line-height:16px;color:#1E1E1E;letter-spacing:-0.302px;">Sestavení + IntelliSense</span>
<svg style="left:942px;top:741px;" width="6" height="3" viewBox="0 0 6 3" preserveAspectRatio="none"><path d="M0 0H6L3.0 3Z" fill="#1E1E1E"/></svg>
<div style="left:1167px;top:732px;width:198px;height:20px;background:#FDFDFE;border:1px solid #D3D8EA;box-sizing:border-box;"></div>
<span id="t46" class="t" style="left:1171px;top:734px;font-size:12px;line-height:16px;color:#6E6E6E;letter-spacing:-0.126px;">Vyhledání v seznamu chyb</span>
<svg style="left:1338px;top:735px;" width="14" height="14" viewBox="0 0 14 14" preserveAspectRatio="none"><circle cx="8.6" cy="5.2" r="3.7" fill="none" stroke="#5A5A5A" stroke-width="1.7"/><path d="M6 8L1.2 12.8" stroke="#5A5A5A" stroke-width="2.2"/></svg>
<svg style="left:1357px;top:741px;" width="6" height="3" viewBox="0 0 6 3" preserveAspectRatio="none"><path d="M0 0H6L3.0 3Z" fill="#5A5A5A"/></svg>
<div style="left:334px;top:755px;width:1031px;height:20px;background:#F5F5F5;"></div>
<div style="left:334px;top:775px;width:1031px;height:1px;background:#CCCEDB;"></div>
<div style="left:360px;top:756px;width:1px;height:19px;background:#CCCEDB;"></div>
<div style="left:385px;top:756px;width:1px;height:19px;background:#CCCEDB;"></div>
<div style="left:435px;top:756px;width:1px;height:19px;background:#CCCEDB;"></div>
<div style="left:1010px;top:756px;width:1px;height:19px;background:#CCCEDB;"></div>
<div style="left:1161px;top:756px;width:1px;height:19px;background:#CCCEDB;"></div>
<div style="left:1311px;top:756px;width:1px;height:19px;background:#CCCEDB;"></div>
<div style="left:1346px;top:756px;width:1px;height:19px;background:#CCCEDB;"></div>
<svg style="left:375px;top:759px;" width="7" height="6" viewBox="0 0 7 6" preserveAspectRatio="none"><path d="M0 0.5H7M6.5 0V6M4.5 2V4.5M2.5 2V3" stroke="#5A5A5A" stroke-width="1"/></svg>
<span id="t47" class="t" style="left:389.4px;top:758px;font-size:12px;line-height:16px;color:#1E1E1E;letter-spacing:-0.344px;">Kód</span>
<span id="t48" class="t" style="left:439.4px;top:758px;font-size:12px;line-height:16px;color:#1E1E1E;letter-spacing:-0.340px;">Popis</span>
<span id="t49" class="t" style="left:1014px;top:758px;font-size:12px;line-height:16px;color:#1E1E1E;letter-spacing:-0.101px;">Projekt</span>
<span id="t50" class="t" style="left:1164.3px;top:758px;font-size:12px;line-height:16px;color:#1E1E1E;letter-spacing:-0.182px;">Soubor</span>
<span id="t51" class="t" style="left:1314.4px;top:758px;font-size:12px;line-height:16px;color:#1E1E1E;transform-origin:0 0;transform:scaleX(0.8404);">Řá...</span>
<div style="left:1375px;top:73px;width:346px;height:410px;background:#fff;"></div>
<div style="left:1375px;top:73px;width:346px;height:21px;background:#40568D;"></div>
<span id="t52" class="t" style="left:1379px;top:76px;font-size:12px;line-height:16px;color:#fff;letter-spacing:-0.122px;">Zobrazení zdrojů - Project1</span>
<svg style="left:1673px;top:81px;" width="8" height="5" viewBox="0 0 8 5" preserveAspectRatio="none"><path d="M0 0H8L4 4.3Z" fill="#B4BEDD"/></svg>
<svg style="left:1689px;top:78px;" width="9" height="12" viewBox="0 0 9 12" preserveAspectRatio="none"><path d="M3 0.5H7M3 0.5V6.5M0.8 6.5H8.2M4.5 6.5V11.2" fill="none" stroke="#B4BEDD" stroke-width="1"/><rect x="5" y="0" width="2" height="6.5" fill="#B4BEDD"/></svg>
<svg style="left:1704px;top:78px;" width="12" height="10" viewBox="0 0 12 10" preserveAspectRatio="none"><path d="M1.5 1L10.5 9M10.5 1L1.5 9" stroke="#B4BEDD" stroke-width="1.3"/></svg>
<svg style="left:1380px;top:100px;" width="6" height="6" viewBox="0 0 6 6" preserveAspectRatio="none"><path d="M6 0V6H0Z" fill="#1E1E1E"/></svg>
<svg style="left:1395px;top:97px;" width="14" height="12" viewBox="0 0 14 12" preserveAspectRatio="none"><rect x="0.5" y="0.5" width="13" height="11" fill="#EEE9F5" stroke="#9B4F96" stroke-width="1"/><path d="M5 1.5V6.5M2.5 4H7.5M9.3 5.5V10.5M6.8 8H11.8" stroke="#2B2B2B" stroke-width="1.7"/></svg>
<div style="left:1413px;top:94px;width:51px;height:18px;background:#EDEDED;"></div>
<span id="t53" class="t" style="left:1414.5px;top:95px;font-size:12px;line-height:16px;color:#000;font-weight:bold;letter-spacing:-0.141px;">Project1</span>
<svg style="left:1399px;top:118px;" width="6" height="6" viewBox="0 0 6 6" preserveAspectRatio="none"><path d="M6 0V6H0Z" fill="#1E1E1E"/></svg>
<svg style="left:1414px;top:115px;" width="14" height="11" viewBox="0 0 14 11" preserveAspectRatio="none"><path d="M2.6 0.6H13.4V10.2H2.6Z" fill="#FBF7EE" stroke="#DCB67A" stroke-width="1.1"/><path d="M0 4.6H9.6L12 10.7H2.4Z" fill="#DCB67A"/></svg>
<span id="t54" class="t" style="left:1434.5px;top:113px;font-size:12px;line-height:16px;color:#1E1E1E;letter-spacing:-0.225px;">Project1.rc</span>
<svg style="left:1419px;top:134px;" width="6" height="10" viewBox="0 0 6 10" preserveAspectRatio="none"><path d="M0.6 0.9V9.1L5 5Z" fill="none" stroke="#1E1E1E" stroke-width="1.1"/></svg>
<svg style="left:1434px;top:133px;" width="14" height="11" viewBox="0 0 14 11" preserveAspectRatio="none"><path d="M0 2H5L6 0H13.2V10.8H0Z" fill="#DCB67A"/><path d="M6.8 1.3H12.3" stroke="#F3E3C4" stroke-width="1"/></svg>
<span id="t55" class="t" style="left:1453.4px;top:131px;font-size:12px;line-height:16px;color:#1E1E1E;letter-spacing:-0.105px;">Accelerator</span>
<svg style="left:1419px;top:152px;" width="6" height="10" viewBox="0 0 6 10" preserveAspectRatio="none"><path d="M0.6 0.9V9.1L5 5Z" fill="none" stroke="#1E1E1E" stroke-width="1.1"/></svg>
<svg style="left:1434px;top:151px;" width="14" height="11" viewBox="0 0 14 11" preserveAspectRatio="none"><path d="M0 2H5L6 0H13.2V10.8H0Z" fill="#DCB67A"/><path d="M6.8 1.3H12.3" stroke="#F3E3C4" stroke-width="1"/></svg>
<span id="t56" class="t" style="left:1453.4px;top:149px;font-size:12px;line-height:16px;color:#1E1E1E;letter-spacing:-0.097px;">Dialog</span>
<svg style="left:1419px;top:170px;" width="6" height="10" viewBox="0 0 6 10" preserveAspectRatio="none"><path d="M0.6 0.9V9.1L5 5Z" fill="none" stroke="#1E1E1E" stroke-width="1.1"/></svg>
<svg style="left:1434px;top:169px;" width="14" height="11" viewBox="0 0 14 11" preserveAspectRatio="none"><path d="M0 2H5L6 0H13.2V10.8H0Z" fill="#DCB67A"/><path d="M6.8 1.3H12.3" stroke="#F3E3C4" stroke-width="1"/></svg>
<span id="t57" class="t" style="left:1453.4px;top:167px;font-size:12px;line-height:16px;color:#1E1E1E;letter-spacing:-0.196px;">Icon</span>
<svg style="left:1419px;top:188px;" width="6" height="10" viewBox="0 0 6 10" preserveAspectRatio="none"><path d="M0.6 0.9V9.1L5 5Z" fill="none" stroke="#1E1E1E" stroke-width="1.1"/></svg>
<svg style="left:1434px;top:187px;" width="14" height="11" viewBox="0 0 14 11" preserveAspectRatio="none"><path d="M0 2H5L6 0H13.2V10.8H0Z" fill="#DCB67A"/><path d="M6.8 1.3H12.3" stroke="#F3E3C4" stroke-width="1"/></svg>
<span id="t58" class="t" style="left:1453.4px;top:185px;font-size:12px;line-height:16px;color:#1E1E1E;letter-spacing:0.134px;">Menu</span>
<svg style="left:1419px;top:206px;" width="6" height="10" viewBox="0 0 6 10" preserveAspectRatio="none"><path d="M0.6 0.9V9.1L5 5Z" fill="none" stroke="#1E1E1E" stroke-width="1.1"/></svg>
<svg style="left:1434px;top:205px;" width="14" height="11" viewBox="0 0 14 11" preserveAspectRatio="none"><path d="M0 2H5L6 0H13.2V10.8H0Z" fill="#DCB67A"/><path d="M6.8 1.3H12.3" stroke="#F3E3C4" stroke-width="1"/></svg>
<span id="t59" class="t" style="left:1453.4px;top:203px;font-size:12px;line-height:16px;color:#1E1E1E;letter-spacing:-0.144px;">String Table</span>
<div style="left:1375px;top:491px;width:346px;height:396px;background:#F7F9FE;"></div>
<div style="left:1375px;top:491px;width:346px;height:21px;background:#40568D;"></div>
<span id="t60" class="t" style="left:1379.4px;top:494px;font-size:12px;line-height:16px;color:#fff;letter-spacing:-0.245px;">Průzkumník řešení</span>
<svg style="left:1673px;top:499px;" width="8" height="5" viewBox="0 0 8 5" preserveAspectRatio="none"><path d="M0 0H8L4 4.3Z" fill="#B4BEDD"/></svg>
<svg style="left:1689px;top:496px;" width="9" height="12" viewBox="0 0 9 12" preserveAspectRatio="none"><path d="M3 0.5H7M3 0.5V6.5M0.8 6.5H8.2M4.5 6.5V11.2" fill="none" stroke="#B4BEDD" stroke-width="1"/><rect x="5" y="0" width="2" height="6.5" fill="#B4BEDD"/></svg>
<svg style="left:1704px;top:496px;" width="12" height="10" viewBox="0 0 12 10" preserveAspectRatio="none"><path d="M1.5 1L10.5 9M10.5 1L1.5 9" stroke="#B4BEDD" stroke-width="1.3"/></svg>
<div style="left:1375px;top:512px;width:346px;height:28px;background:#CCD5F0;"></div>
<svg style="left:1383px;top:519px;" width="14" height="14" viewBox="0 0 14 14" preserveAspectRatio="none"><g transform="translate(7 7) "><circle r="6" fill="#AEB3CA"/><path d="M3.4 0H-2.4M0.2 -3L-2.9 0L0.2 3" fill="none" stroke="#CCD5F0" stroke-width="1.9"/></g></svg>
<svg style="left:1405px;top:519px;" width="14" height="14" viewBox="0 0 14 14" preserveAspectRatio="none"><g transform="translate(7 7) scale(-1 1)"><circle r="6" fill="#AEB3CA"/><path d="M3.4 0H-2.4M0.2 -3L-2.9 0L0.2 3" fill="none" stroke="#CCD5F0" stroke-width="1.9"/></g></svg>
<svg style="left:1427px;top:518px;" width="15" height="15" viewBox="0 0 15 15" preserveAspectRatio="none"><path d="M7.4 1.6L1.2 7.6H2.6V14H12.2V7.6H13.6L10.8 4.9V2H9.8V3.9Z" fill="#DADAEE" stroke="#2D2D2D" stroke-width="1.2" stroke-linejoin="round"/><rect x="5.7" y="9" width="3.4" height="5" fill="#2D2D2D"/></svg>
<svg style="left:1449px;top:518px;" width="16" height="16" viewBox="0 0 16 16" preserveAspectRatio="none"><path d="M6.5 2.3L7.5 0.8H15V10.5H6.5Z" fill="#E2AE55"/><path d="M10.5 2H13.5" stroke="#F4D9A6" stroke-width="1"/><rect x="1.6" y="6.6" width="8.4" height="6.8" fill="#DADAEE" stroke="#2D2D2D" stroke-width="1.2"/><path d="M1 7H10.6" stroke="#2D2D2D" stroke-width="1.8"/><path d="M2 5V2.8H5.5M4 1L5.8 2.8L4 4.6" fill="none" stroke="#0D4F9A" stroke-width="1.2"/><path d="M15 10.5V12.8H11.6M13.2 11L11.4 12.8L13.2 14.6" fill="none" stroke="#0D4F9A" stroke-width="1.2"/></svg>
<svg style="left:1471px;top:525px;" width="6" height="3" viewBox="0 0 6 3" preserveAspectRatio="none"><path d="M0 0H6L3.0 3Z" fill="#1E1E1E"/></svg>
<div style="left:1483px;top:516px;width:1px;height:20px;background:#A9B3D3;"></div>
<svg style="left:1493px;top:518px;" width="16" height="16" viewBox="0 0 16 16" preserveAspectRatio="none"><circle cx="9" cy="10" r="4.5" fill="#DADAEE" stroke="#2D2D2D" stroke-width="1.2"/><path d="M9 7.2V10.3H11.6" fill="none" stroke="#2D2D2D" stroke-width="1.1"/><path d="M0.8 1.5H5.8L3.3 3.6Z M3.3 3V5.2" fill="#2D2D2D" stroke="#2D2D2D" stroke-width="0.9"/></svg>
<svg style="left:1514px;top:525px;" width="6" height="3" viewBox="0 0 6 3" preserveAspectRatio="none"><path d="M0 0H6L3.0 3Z" fill="#1E1E1E"/></svg>
<svg style="left:1527px;top:519px;" width="14" height="14" viewBox="0 0 14 14" preserveAspectRatio="none"><path d="M12.3 4.5H2.6M5.6 1.3L2.2 4.5L5.6 7.7" fill="none" stroke="#2D2D2D" stroke-width="1.9"/><path d="M2 9.6H11.6M8.6 6.4L12 9.6L8.6 12.8" fill="none" stroke="#2D2D2D" stroke-width="1.9"/></svg>
<svg style="left:1550px;top:519px;" width="13" height="13" viewBox="0 0 13 13" preserveAspectRatio="none"><path d="M5 3.5V1.5H11.5V8H9.5M3 5.5V3.5H9.5V10H7.5" fill="none" stroke="#2D2D2D" stroke-width="1"/><rect x="1.2" y="5.5" width="6.6" height="6.3" fill="#DADAEE" stroke="#2D2D2D" stroke-width="1.1"/><path d="M3 8.7H6" stroke="#0D4F9A" stroke-width="1.5"/></svg>
<svg style="left:1570px;top:518px;" width="16" height="16" viewBox="0 0 16 16" preserveAspectRatio="none"><path d="M4 11.5H1.5V1.5H8" fill="none" stroke="#2D2D2D" stroke-width="1.1"/><path d="M8 1.5Q10 1.5 10.5 3" fill="none" stroke="#2D2D2D" stroke-width="1.1"/><path d="M4.5 3.5H11L14.5 7V14.7H4.5Z" fill="#DADAEE" stroke="#2D2D2D" stroke-width="1.1"/><path d="M6.6 8.3H12.2M6.6 10.4H12.2M6.6 12.5H10.5" stroke="#2D2D2D" stroke-width="1"/><path d="M10.8 3.6V7.2H14.4" fill="none" stroke="#2D2D2D" stroke-width="1"/></svg>
<div style="left:1592px;top:516px;width:1px;height:20px;background:#A9B3D3;"></div>
<svg style="left:1601px;top:520px;" width="14" height="11" viewBox="0 0 14 11" preserveAspectRatio="none"><path d="M5 1.2L1.4 5.4L5 9.6M8.8 1.2L12.4 5.4L8.8 9.6" fill="none" stroke="#2D2D2D" stroke-width="1.6"/></svg>
<svg style="left:1622px;top:518px;" width="16" height="16" viewBox="0 0 16 16" preserveAspectRatio="none"><path d="M9.3 6.7L1.9 13.9" stroke="#2D2D2D" stroke-width="3" stroke-linecap="round"/><circle cx="11.4" cy="4.7" r="4.3" fill="#2D2D2D"/><path d="M11.6 4.6L15.5 0.7" stroke="#CCD5F0" stroke-width="1.9"/></svg>
<div style="left:1641px;top:514px;width:22px;height:24px;background:#FFEBC6;border:1px solid #E3B25C;box-sizing:border-box;"></div>
<svg style="left:1644px;top:523px;" width="17" height="7" viewBox="0 0 17 7" preserveAspectRatio="none"><path d="M0.6 4.5H16" stroke="#1E1E1E" stroke-width="1.3"/><rect x="7" y="1.2" width="9" height="3.9" fill="#1E1E1E"/></svg>
<div style="left:1375px;top:540px;width:346px;height:22px;background:#FDFDFE;border:1px solid #E4E9F7;box-sizing:border-box;"></div>
<div style="left:1375px;top:561px;width:346px;height:2px;background:#C9D3F0;"></div>
<span id="t61" class="t" style="left:1380px;top:543px;font-size:12px;line-height:16px;color:#6E6E6E;letter-spacing:-0.075px;">Prohledat: Průzkumník řešení (Ctrl+ů)</span>
<svg style="left:1692px;top:543px;" width="14" height="14" viewBox="0 0 14 14" preserveAspectRatio="none"><circle cx="8.6" cy="5.2" r="3.7" fill="none" stroke="#5A5A5A" stroke-width="1.7"/><path d="M6 8L1.2 12.8" stroke="#5A5A5A" stroke-width="2.2"/></svg>
<svg style="left:1712px;top:549px;" width="6" height="3" viewBox="0 0 6 3" preserveAspectRatio="none"><path d="M0 0H6L3.0 3Z" fill="#5A5A5A"/></svg>
<div style="left:1375px;top:581px;width:346px;height:19px;background:#E4E6ED;"></div>
<svg style="left:1388px;top:565px;" width="16" height="15" viewBox="0 0 16 15" preserveAspectRatio="none"><path d="M0.6 6V0.8H13.4V11.2H9.5" fill="none" stroke="#424242" stroke-width="1.2"/><path d="M0.6 1.6H13.4" stroke="#424242" stroke-width="1.8"/><path d="M6.6 6.3L8.8 7.2V13.6L6.6 14.5L3 11L1.4 12.3L0.5 11.9V8.9L1.4 8.5L3 9.8Z M6.7 8.7L4.5 10.4L6.7 12.1Z" fill="#8A4FD0" fill-rule="evenodd"/></svg>
<span id="t62" class="t" style="left:1408.7px;top:565px;font-size:12px;line-height:16px;color:#1E1E1E;letter-spacing:-0.262px;">Řešení Project1 (1 z 1 projektů)</span>
<svg style="left:1386px;top:588px;" width="6" height="6" viewBox="0 0 6 6" preserveAspectRatio="none"><path d="M6 0V6H0Z" fill="#1E1E1E"/></svg>
<svg style="left:1406px;top:585px;" width="14" height="12" viewBox="0 0 14 12" preserveAspectRatio="none"><rect x="0.5" y="0.5" width="13" height="11" fill="#EEE9F5" stroke="#9B4F96" stroke-width="1"/><path d="M5 1.5V6.5M2.5 4H7.5M9.3 5.5V10.5M6.8 8H11.8" stroke="#2B2B2B" stroke-width="1.7"/></svg>
<span id="t63" class="t" style="left:1426.5px;top:583px;font-size:12px;line-height:16px;color:#000;font-weight:bold;letter-spacing:-0.181px;">Project1</span>
<svg style="left:1404px;top:604px;" width="6" height="10" viewBox="0 0 6 10" preserveAspectRatio="none"><path d="M0.6 0.9V9.1L5 5Z" fill="none" stroke="#1E1E1E" stroke-width="1.1"/></svg>
<svg style="left:1424px;top:605px;" width="15" height="8" viewBox="0 0 15 8" preserveAspectRatio="none"><rect x="0" y="1.5" width="4" height="4" fill="#2D2D2D"/><rect x="5" y="3" width="2" height="1.2" fill="#2D2D2D"/><rect x="8" y="0.5" width="6.5" height="6.5" fill="#2D2D2D"/></svg>
<span id="t64" class="t" style="left:1444.4px;top:601px;font-size:12px;line-height:16px;color:#1E1E1E;letter-spacing:-0.380px;">Odkazy</span>
<svg style="left:1404px;top:622px;" width="6" height="10" viewBox="0 0 6 10" preserveAspectRatio="none"><path d="M0.6 0.9V9.1L5 5Z" fill="none" stroke="#1E1E1E" stroke-width="1.1"/></svg>
<svg style="left:1424px;top:620px;" width="16" height="16" viewBox="0 0 16 16" preserveAspectRatio="none"><path d="M0.5 3L1.5 1.3H7L8 3H13.5V11H0.5Z" fill="#DCB67A"/><rect x="7" y="7" width="7.5" height="7.5" fill="#fff" stroke="#1BA1E2" stroke-width="1.2"/><path d="M9 12.5L12.3 9.2M10 9H12.5V11.5" fill="none" stroke="#1BA1E2" stroke-width="1.1"/></svg>
<span id="t65" class="t" style="left:1444.4px;top:619px;font-size:12px;line-height:16px;color:#1E1E1E;letter-spacing:-0.287px;">Externí závislosti</span>
<svg style="left:1404px;top:642px;" width="6" height="6" viewBox="0 0 6 6" preserveAspectRatio="none"><path d="M6 0V6H0Z" fill="#1E1E1E"/></svg>
<svg style="left:1423px;top:638px;" width="16" height="16" viewBox="0 0 16 16" preserveAspectRatio="none"><path d="M3.5 1.5H14.5V10.5H3.5Z" fill="#FBF6EC" stroke="#DCB67A" stroke-width="1"/><path d="M1.3 5.5H11L13 11.5H3.3Z" fill="#DCB67A"/><path d="M0 9H6L3.6 11.5V14.5H2.4V11.5Z" fill="#424242"/></svg>
<span id="t66" class="t" style="left:1444.4px;top:637px;font-size:12px;line-height:16px;color:#1E1E1E;letter-spacing:-0.060px;">Hlavičkové soubory</span>
<svg style="left:1422px;top:658px;" width="6" height="10" viewBox="0 0 6 10" preserveAspectRatio="none"><path d="M0.6 0.9V9.1L5 5Z" fill="none" stroke="#1E1E1E" stroke-width="1.1"/></svg>
<svg style="left:1444px;top:657px;" width="12" height="14" viewBox="0 0 12 14" preserveAspectRatio="none"><path d="M0.5 0.5H6.5L10 4V12.3H0.5Z" fill="#F4F0FA" stroke="#424242" stroke-width="1"/><path d="M6.5 0.5V4H10" fill="none" stroke="#424242"/><path d="M3.3 4.6V10.2M3.3 7.4H6.6V10.2" fill="none" stroke="#9B4F96" stroke-width="1.4"/></svg>
<span id="t67" class="t" style="left:1462px;top:655px;font-size:12px;line-height:16px;color:#1E1E1E;letter-spacing:0.073px;">framework.h</span>
<svg style="left:1444px;top:675px;" width="12" height="14" viewBox="0 0 12 14" preserveAspectRatio="none"><path d="M0.5 0.5H6.5L10 4V12.3H0.5Z" fill="#F4F0FA" stroke="#424242" stroke-width="1"/><path d="M6.5 0.5V4H10" fill="none" stroke="#424242"/><path d="M3.3 4.6V10.2M3.3 7.4H6.6V10.2" fill="none" stroke="#9B4F96" stroke-width="1.4"/></svg>
<span id="t68" class="t" style="left:1462px;top:673px;font-size:12px;line-height:16px;color:#1E1E1E;letter-spacing:-0.140px;">Project1.h</span>
<svg style="left:1422px;top:694px;" width="6" height="10" viewBox="0 0 6 10" preserveAspectRatio="none"><path d="M0.6 0.9V9.1L5 5Z" fill="none" stroke="#1E1E1E" stroke-width="1.1"/></svg>
<svg style="left:1444px;top:693px;" width="12" height="14" viewBox="0 0 12 14" preserveAspectRatio="none"><path d="M0.5 0.5H6.5L10 4V12.3H0.5Z" fill="#F4F0FA" stroke="#424242" stroke-width="1"/><path d="M6.5 0.5V4H10" fill="none" stroke="#424242"/><path d="M3.3 4.6V10.2M3.3 7.4H6.6V10.2" fill="none" stroke="#9B4F96" stroke-width="1.4"/></svg>
<span id="t69" class="t" style="left:1462px;top:691px;font-size:12px;line-height:16px;color:#1E1E1E;letter-spacing:-0.429px;">Resource.h</span>
<svg style="left:1444px;top:711px;" width="12" height="14" viewBox="0 0 12 14" preserveAspectRatio="none"><path d="M0.5 0.5H6.5L10 4V12.3H0.5Z" fill="#F4F0FA" stroke="#424242" stroke-width="1"/><path d="M6.5 0.5V4H10" fill="none" stroke="#424242"/><path d="M3.3 4.6V10.2M3.3 7.4H6.6V10.2" fill="none" stroke="#9B4F96" stroke-width="1.4"/></svg>
<span id="t70" class="t" style="left:1462px;top:709px;font-size:12px;line-height:16px;color:#1E1E1E;letter-spacing:-0.067px;">targetver.h</span>
<svg style="left:1404px;top:732px;" width="6" height="6" viewBox="0 0 6 6" preserveAspectRatio="none"><path d="M6 0V6H0Z" fill="#1E1E1E"/></svg>
<svg style="left:1423px;top:728px;" width="16" height="16" viewBox="0 0 16 16" preserveAspectRatio="none"><path d="M3.5 1.5H14.5V10.5H3.5Z" fill="#FBF6EC" stroke="#DCB67A" stroke-width="1"/><path d="M1.3 5.5H11L13 11.5H3.3Z" fill="#DCB67A"/><path d="M0 9H6L3.6 11.5V14.5H2.4V11.5Z" fill="#424242"/></svg>
<span id="t71" class="t" style="left:1444px;top:727px;font-size:12px;line-height:16px;color:#1E1E1E;letter-spacing:-0.075px;">Soubory zdrojů</span>
<svg style="left:1442px;top:747px;" width="15" height="12" viewBox="0 0 15 12" preserveAspectRatio="none"><rect x="0.5" y="0.5" width="13" height="11" fill="#F0EEF8" stroke="#424242" stroke-width="1"/><path d="M1.5 9.5L4.5 6L7 8.5L9 6.5L12.5 10" fill="none" stroke="#424242" stroke-width="1.1"/><circle cx="9.5" cy="3.8" r="1.1" fill="#424242"/></svg>
<span id="t72" class="t" style="left:1462px;top:745px;font-size:12px;line-height:16px;color:#1E1E1E;letter-spacing:-0.087px;">Project1.ico</span>
<svg style="left:1442px;top:764px;" width="14" height="14" viewBox="0 0 14 14" preserveAspectRatio="none"><path d="M0.5 2.5H7L10 5.5V13.5H0.5Z" fill="#F0EEF8" stroke="#424242" stroke-width="1"/><path d="M3.5 2.5V0.5H10L13 3.5V11.5H10" fill="none" stroke="#424242"/><path d="M10 0.5V3.5H13" fill="none" stroke="#424242"/></svg>
<span id="t73" class="t" style="left:1462px;top:763px;font-size:12px;line-height:16px;color:#1E1E1E;letter-spacing:-0.187px;">Project1.rc</span>
<svg style="left:1442px;top:783px;" width="15" height="12" viewBox="0 0 15 12" preserveAspectRatio="none"><rect x="0.5" y="0.5" width="13" height="11" fill="#F0EEF8" stroke="#424242" stroke-width="1"/><path d="M1.5 9.5L4.5 6L7 8.5L9 6.5L12.5 10" fill="none" stroke="#424242" stroke-width="1.1"/><circle cx="9.5" cy="3.8" r="1.1" fill="#424242"/></svg>
<span id="t74" class="t" style="left:1462px;top:781px;font-size:12px;line-height:16px;color:#1E1E1E;letter-spacing:0.013px;">small.ico</span>
<svg style="left:1404px;top:804px;" width="6" height="6" viewBox="0 0 6 6" preserveAspectRatio="none"><path d="M6 0V6H0Z" fill="#1E1E1E"/></svg>
<svg style="left:1423px;top:800px;" width="16" height="16" viewBox="0 0 16 16" preserveAspectRatio="none"><path d="M3.5 1.5H14.5V10.5H3.5Z" fill="#FBF6EC" stroke="#DCB67A" stroke-width="1"/><path d="M1.3 5.5H11L13 11.5H3.3Z" fill="#DCB67A"/><path d="M0 9H6L3.6 11.5V14.5H2.4V11.5Z" fill="#424242"/></svg>
<span id="t75" class="t" style="left:1444px;top:799px;font-size:12px;line-height:16px;color:#1E1E1E;letter-spacing:0.018px;">Zdrojové soubory</span>
<div style="left:1308px;top:805px;width:400px;height:107px;background:#FCFCFC;border:1px solid #3F5294;box-sizing:border-box;"></div>
<svg style="left:1327px;top:821px;" width="21" height="22" viewBox="0 0 21 22" preserveAspectRatio="none"><path d="M10.5 1C5.5 1 4.3 5.5 4.3 9C4.3 13 2.5 14 0.5 15.6V16.6H20.5V15.6C18.5 14 16.7 13 16.7 9C16.7 5.5 15.5 1 10.5 1Z" fill="#424242"/><path d="M7.3 18.3H13.7C13.7 20.3 12.3 21.5 10.5 21.5C8.7 21.5 7.3 20.3 7.3 18.3Z" fill="#424242"/></svg>
<span id="t76" class="t" style="left:1361.4px;top:819px;font-size:12px;line-height:16px;color:#1E1E1E;letter-spacing:-0.029px;">Aktualizace Visual Studio 2019</span>
<span id="t77" class="t" style="left:1361.3px;top:843px;font-size:12px;line-height:16px;color:#1E1E1E;letter-spacing:-0.203px;">Verze 16.4.1 je stažená a připravená k instalaci.</span>
<svg style="left:1689px;top:814px;" width="11" height="11" viewBox="0 0 11 11" preserveAspectRatio="none"><path d="M1 1L10 10M10 1L1 10" stroke="#1E1E1E" stroke-width="1.5"/></svg>
<div style="left:1563px;top:876px;width:132px;height:23px;background:#E1E1E1;border:1px solid #ADADAD;box-sizing:border-box;"></div>
<span id="t78" class="t" style="left:1573px;top:880px;font-size:12px;line-height:16px;color:#1E1E1E;letter-spacing:0.112px;">Zobrazit podrobnosti</span>
<div style="left:0px;top:913px;width:1728px;height:23px;background:#40508D;"></div>
<svg style="left:3px;top:919px;" width="18" height="13" viewBox="0 0 18 13" preserveAspectRatio="none"><path d="M5 1.5H16.2L13.5 11.5H1.8Z" fill="none" stroke="#fff" stroke-width="1.2"/></svg>
<span id="t79" class="t" style="left:28.5px;top:917px;font-size:12px;line-height:16px;color:#fff;letter-spacing:-0.219px;">Připraven</span>
<svg style="left:1442px;top:919px;" width="10" height="12" viewBox="0 0 10 12" preserveAspectRatio="none"><path d="M5 12V2M1 5.5L5 1.2L9 5.5" fill="none" stroke="#fff" stroke-width="1.7"/></svg>
<span id="t80" class="t" style="left:1460px;top:917px;font-size:12px;line-height:16px;color:#fff;letter-spacing:-0.045px;">Přidat do správy zdrojového kódu</span>
<svg style="left:1644px;top:922px;" width="8" height="5" viewBox="0 0 8 5" preserveAspectRatio="none"><path d="M0 4.5H8L4 0Z" fill="#fff"/></svg>
<svg style="left:1672px;top:916px;" width="18" height="18" viewBox="0 0 18 18" preserveAspectRatio="none"><path d="M8 1C4.5 1 3.6 4.2 3.6 6.8C3.6 9.8 2.4 10.6 1 11.8V12.5H15V11.8C13.6 10.6 12.4 9.8 12.4 6.8C12.4 4.2 11.5 1 8 1Z" fill="#C9CFE6"/><path d="M5.8 13.6H10.2C10.2 15 9.2 15.8 8 15.8C6.8 15.8 5.8 15 5.8 13.6Z" fill="#C9CFE6"/></svg>
<div style="left:1680px;top:923px;width:12px;height:12px;background:#E51400;border-radius:6px;"></div>
<span id="t81" class="t" style="left:1683.2px;top:922px;font-size:10px;line-height:16px;color:#fff;">2</span>
<svg style="left:1714px;top:922px;" width="12" height="12" viewBox="0 0 12 12" preserveAspectRatio="none"><g fill="#7E8AB8"><rect x="9" y="1" width="1.5" height="1.5"/><rect x="6" y="4" width="1.5" height="1.5"/><rect x="9" y="4" width="1.5" height="1.5"/><rect x="3" y="7" width="1.5" height="1.5"/><rect x="6" y="7" width="1.5" height="1.5"/><rect x="9" y="7" width="1.5" height="1.5"/></g></svg>
<div style="left:1637px;top:836px;width:84px;height:91px;background:rgba(255,255,255,0.40);border-radius:9px;"></div>
<svg style="left:1640px;top:838px;" width="80" height="70" viewBox="0 0 80 70" preserveAspectRatio="none"><g fill="none" stroke="rgba(70,70,75,0.60)" stroke-width="1.25" stroke-linejoin="miter"><path d="M33.8 5.5L4.7 34.2L34.2 63.6L58 47.5 M33.8 5.5L62 34.5L56.5 44"/><path d="M36 11L41.8 4.7L69.8 35.2L61 45L56.5 43.5 M34.2 63.6L40.3 64.7L54 50"/><path d="M32.3 13.4L65.4 30.5 M34 11.5L67 32.5 M25.8 19.6L45.4 24.7L29.8 15.6Z M19.6 25.8L61.8 34.2L22.5 22.8Z M12.7 33.1L36 38.2L15.3 30.2Z M14.5 37.8L53.8 46.5 M18.5 42.2L56.7 48 M14.5 37.8L18.5 42.2"/></g></svg>
<span id="t82" class="t" style="left:1647.5px;top:902px;font-size:10px;line-height:16px;color:rgba(55,55,60,0.8);letter-spacing:-0.153px;">INSTALUJ.CZ</span>
</body></html>
